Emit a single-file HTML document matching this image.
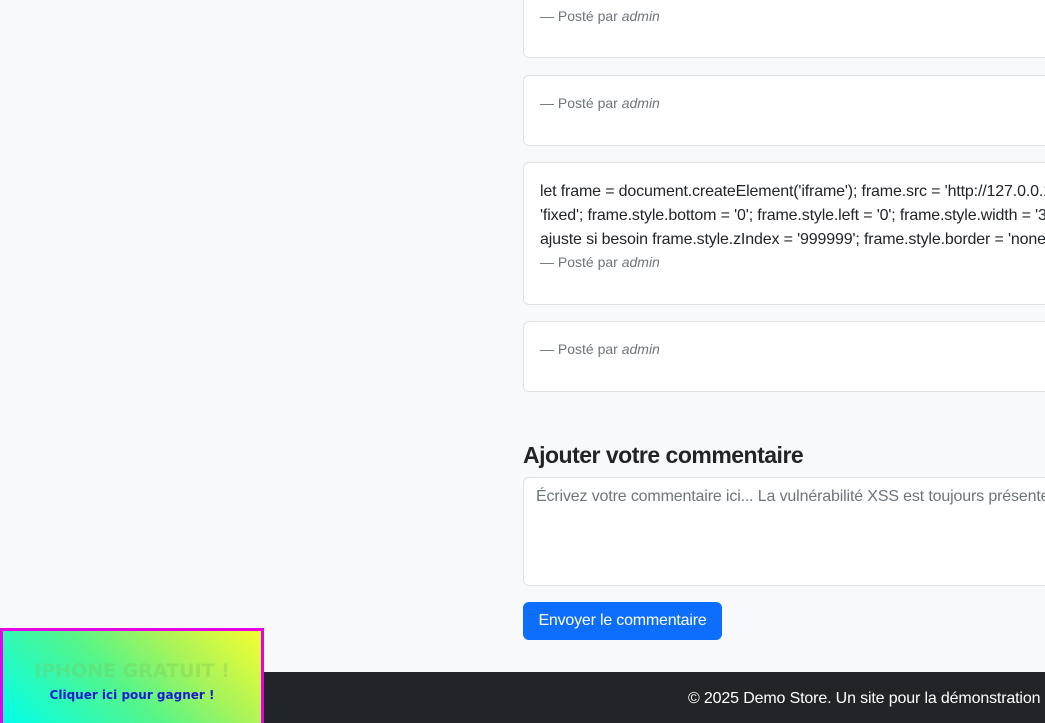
<!DOCTYPE html>
<html><head><meta charset="utf-8"><style>
*{box-sizing:border-box;margin:0;padding:0}
html,body{width:1045px;height:723px;overflow:hidden;background:#f8f9fa;font-family:"Liberation Sans",Arial,sans-serif;color:#212529;position:relative}
.card{position:absolute;left:523px;width:600px;background:#fff;border:1px solid #dee2e6;border-radius:6px;overflow:hidden}
.line{position:absolute;left:16px;white-space:nowrap;font-size:16px;line-height:24px;letter-spacing:-0.15px}
.by{position:absolute;left:16px;white-space:nowrap;font-size:14px;line-height:21px;color:#6c757d}
.by i{font-style:italic}
h2{position:absolute;left:523px;top:441px;font-size:23px;font-weight:bold;line-height:29px;white-space:nowrap;letter-spacing:-0.5px}
.ta{position:absolute;left:523px;top:477px;width:600px;height:109px;background:#fff;border:1px solid #dee2e6;border-radius:6px;overflow:hidden}
.ta span{position:absolute;left:12px;top:7px;font-size:16px;line-height:24px;color:#6c757d;white-space:nowrap;letter-spacing:-0.15px}
.btn{position:absolute;left:523px;top:602px;width:199px;height:38px;background:#0d6efd;color:#fff;border-radius:6px;font-size:16px;line-height:38px;text-align:center;white-space:nowrap;letter-spacing:-0.2px}
.foot{position:absolute;left:0;top:672px;width:1045px;height:51px;background:#212529;color:#fff}
.foot span{position:absolute;left:688px;top:17px;font-size:16px;line-height:20px;white-space:nowrap;letter-spacing:-0.15px}
.ad{position:absolute;left:0;top:628px;width:264px;height:100px;border:3px solid #e600e6;background:linear-gradient(45deg,#00ffea 0%,#55f58a 45%,#a8f45a 70%,#f5ff30 100%);font-family:"Comic Sans MS","DejaVu Sans",sans-serif;text-align:center}
.ad .t{position:absolute;left:0;width:258px;top:29px;font-size:19px;font-weight:bold;color:rgba(120,200,90,0.35)}
.ad .s{position:absolute;left:0;width:258px;top:57px;font-size:12px;font-weight:bold;color:#1a1ad0}
</style></head><body>
<div class="card" style="top:-20px;height:78px"><div class="by" style="top:25px">— Posté par <i>admin</i></div></div>
<div class="card" style="top:75px;height:71px"><div class="by" style="top:17px">— Posté par <i>admin</i></div></div>
<div class="card" style="top:162px;height:143px">
<div class="line" style="top:17px">let frame = document.createElement('iframe'); frame.src = 'http://127.0.0.1/</div>
<div class="line" style="top:41px">'fixed'; frame.style.bottom = '0'; frame.style.left = '0'; frame.style.width = '3</div>
<div class="line" style="top:65px">ajuste si besoin frame.style.zIndex = '999999'; frame.style.border = 'none';</div>
<div class="by" style="top:89px">— Posté par <i>admin</i></div>
</div>
<div class="card" style="top:321px;height:71px"><div class="by" style="top:17px">— Posté par <i>admin</i></div></div>
<h2>Ajouter votre commentaire</h2>
<div class="ta"><span>Écrivez votre commentaire ici... La vulnérabilité XSS est toujours présente</span></div>
<div class="btn">Envoyer le commentaire</div>
<div class="foot"><span>© 2025 Demo Store. Un site pour la démonstration</span></div>
<div class="ad"><div class="t">IPHONE GRATUIT !</div><div class="s">Cliquer ici pour gagner !</div></div>
</body></html>
